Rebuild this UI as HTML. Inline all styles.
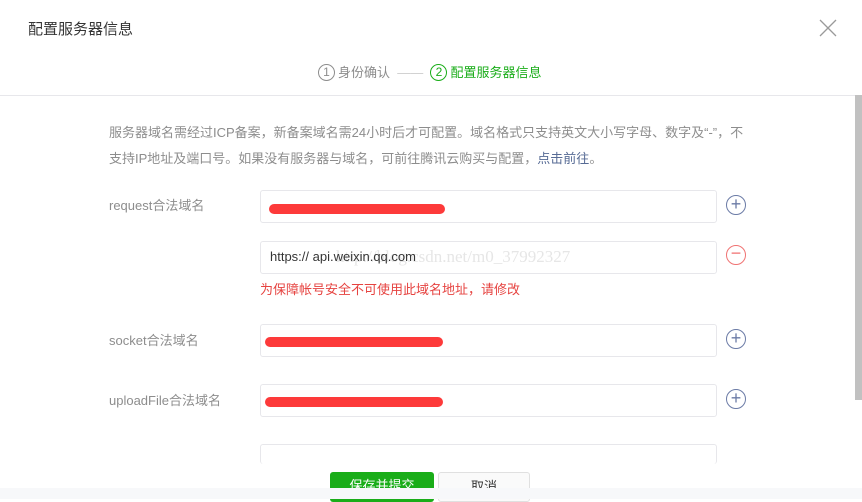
<!DOCTYPE html>
<html><head><meta charset="utf-8"><style>
*{margin:0;padding:0;box-sizing:border-box}
body{width:862px;height:499px;overflow:hidden;background:#fff;font-family:"Liberation Sans","Noto Sans CJK SC",sans-serif;position:relative;color:#353535}
.a{position:absolute}
.title{left:28px;top:18px;font-size:15px;color:#353535}
.close{left:818px;top:18px;width:20px;height:20px}
.steps{left:318px;top:64px;font-size:13px;line-height:18px;color:#8d8d8d;white-space:nowrap}
.steps .c{display:inline-block;width:17px;height:17px;border:1px solid #8d8d8d;border-radius:50%;font-size:12px;text-align:center;line-height:15px;vertical-align:top;margin-right:3px}
.steps .g{color:#1aad19}.steps .g .c{border-color:#1aad19}
.hr{left:0;top:95px;width:856px;height:1px;background:#e7e7eb}
.sb{left:855px;top:95px;width:7px;height:305px;background:#c1c1c1}
.desc{left:109px;top:120px;width:680px;font-size:13px;line-height:26px;color:#8d8d8d;white-space:nowrap}
.desc span{color:#576b95}
.lbl{left:109px;font-size:13px;color:#8d8d8d}
.in{left:260px;width:457px;height:33px;border:1px solid #e7e7eb;border-radius:3px;background:#fff}
.red{position:absolute;left:6px;top:11px;width:178px;height:10px;background:#fd3a3a;border-radius:6px}
.ic{left:726px;width:20px;height:20px;border:1.5px solid #6b7ba6;border-radius:50%;color:#6b7ba6;text-align:center;font-size:18px;line-height:16px}
.err{left:260px;top:279px;font-size:13px;color:#e64340}
.btn{top:472px;height:30px;border-radius:3px;font-size:13px;text-align:center;line-height:28px}
.bottom{left:0;top:488px;width:862px;height:11px;background:#f7f8fa;z-index:5}
</style></head><body>
<div class="a title">配置服务器信息</div>
<svg class="a close" viewBox="0 0 20 20"><path d="M2 2L18 18M18 2L2 18" stroke="#9a9a9a" stroke-width="1.3"/></svg>
<div class="a steps"><span class="c">1</span>身份确认 &nbsp;<span style="color:#ccc">——</span>&nbsp; <span class="g"><span class="c">2</span>配置服务器信息</span></div>
<div class="a hr"></div>
<div class="a sb"></div>
<div class="a desc">服务器域名需经过ICP备案，新备案域名需24小时后才可配置。域名格式只支持英文大小写字母、数字及“-”，不<br>支持IP地址及端口号。如果没有服务器与域名，可前往腾讯云购买与配置，<span>点击前往</span>。</div>
<div class="a lbl" style="top:195px">request合法域名</div>
<div class="a in" style="top:190px"><div class="red" style="top:13px;left:8px;width:176px"></div></div>
<div class="a ic" style="top:195px">+</div>
<div class="a in" style="top:241px;font-size:13px;padding:7px 9px;color:#353535"><span style="position:absolute;left:75px;top:5px;font-family:'Liberation Serif',serif;font-size:17px;color:#e6e6e6">http://blog.csdn.net/m0_37992327</span><span style="position:relative">https:// api.weixin.qq.com</span></div>
<div class="a ic" style="top:245px;border-color:#f07373;color:#f07373;line-height:15px">−</div>
<div class="a err">为保障帐号安全不可使用此域名地址，请修改</div>
<div class="a lbl" style="top:330px">socket合法域名</div>
<div class="a in" style="top:324px"><div class="red" style="left:4px;top:12px"></div></div>
<div class="a ic" style="top:329px">+</div>
<div class="a lbl" style="top:390px">uploadFile合法域名</div>
<div class="a in" style="top:384px"><div class="red" style="left:4px;top:12px"></div></div>
<div class="a ic" style="top:389px">+</div>
<div class="a in" style="top:444px;height:20px;border-bottom:none"></div>
<div class="a btn" style="left:330px;width:104px;background:#1aad19;color:#fff">保存并提交</div>
<div class="a btn" style="left:438px;width:92px;border:1px solid #e0e0e0;background:#fafafa">取消</div>
<div class="a bottom"></div>
</body></html>
